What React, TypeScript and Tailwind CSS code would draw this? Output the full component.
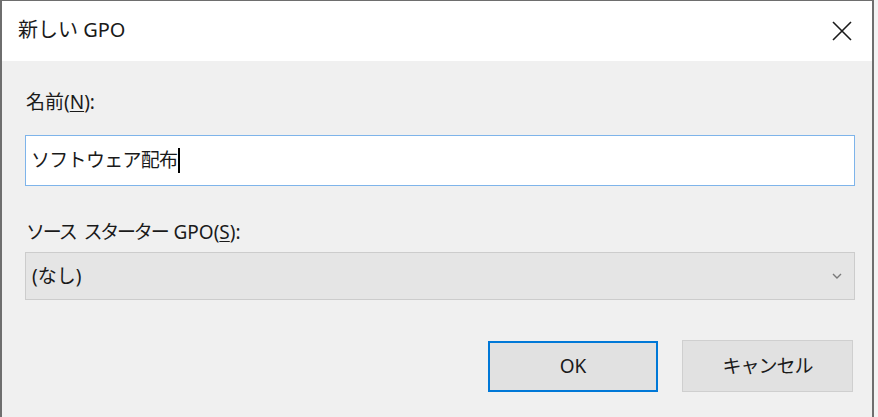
import React from "react";

export default function App() {
  const font = { fontFamily: '"Noto Sans", "Noto Sans CJK JP", sans-serif' };
  return (
    <div className="w-[878px] h-[417px] bg-[#f0f0f0] flex overflow-hidden" style={font}>
      <div className="w-[874px] h-full flex flex-col border-l-2 border-r-2 border-t border-[#6e6e6e] bg-[#f0f0f0]">
        {/* Title bar */}
        <div className="h-[60px] bg-white flex items-center justify-between pl-[16px] pr-[20px] shrink-0">
          <span className="text-[20px] text-[#1a1a1a] leading-none pb-[2px]">新しい GPO</span>
          <svg width="20" height="20" viewBox="0 0 20 20">
            <path d="M1 1 L19 19 M19 1 L1 19" stroke="#1a1a1a" strokeWidth="1.6" fill="none" />
          </svg>
        </div>
        {/* Body */}
        <div className="flex flex-col pl-[23px] pr-[17px] pt-[29px] text-[#1a1a1a]">
          <div className="text-[19px] leading-[24px] pl-[1px]">
            名前(<span className="underline underline-offset-2">N</span>):
          </div>
          <div className="mt-[21px] h-[51px] bg-white border border-[#7eb4ea] flex items-center pl-[5px]">
            <span className="text-[19px] leading-none tracking-[-0.7px]">ソフトウェア配布</span>
            <span className="w-[2px] h-[25px] bg-black ml-[1px]" />
          </div>
          <div className="mt-[34px] text-[19px] leading-[24px] pl-[1px] flex items-baseline">
            <span className="tracking-[-2.2px]">ソース</span>
            <span className="inline-block w-[8px]" />
            <span className="tracking-[-2.2px]">スターター</span>
            <span className="inline-block w-[6px]" />
            <span>
              GPO(<span className="underline underline-offset-2">S</span>):
            </span>
          </div>
          <div className="mt-[8px] h-[48px] bg-[#e5e5e5] border border-[#cccccc] flex items-center justify-between pl-[6px] pr-[12px]">
            <span className="text-[19px] leading-none">(なし)</span>
            <svg width="10" height="6" viewBox="0 0 10 6">
              <path d="M1 1 L5 5 L9 1" stroke="#7a7a7a" strokeWidth="1.4" fill="none" />
            </svg>
          </div>
          <div className="mt-[41px] flex justify-end gap-[24px] pr-[2px]">
            <button className="w-[170px] h-[51px] bg-[#e1e1e1] border-2 border-[#0078d7] text-[19px] flex items-center justify-center">
              OK
            </button>
            <button className="w-[171px] h-[52px] -mt-[1px] bg-[#e1e1e1] border border-[#cfcfcf] text-[19px] tracking-[-1px] flex items-center justify-center">
              キャンセル
            </button>
          </div>
        </div>
      </div>
      <div className="flex-1 bg-[#f3f3f3]" />
    </div>
  );
}
